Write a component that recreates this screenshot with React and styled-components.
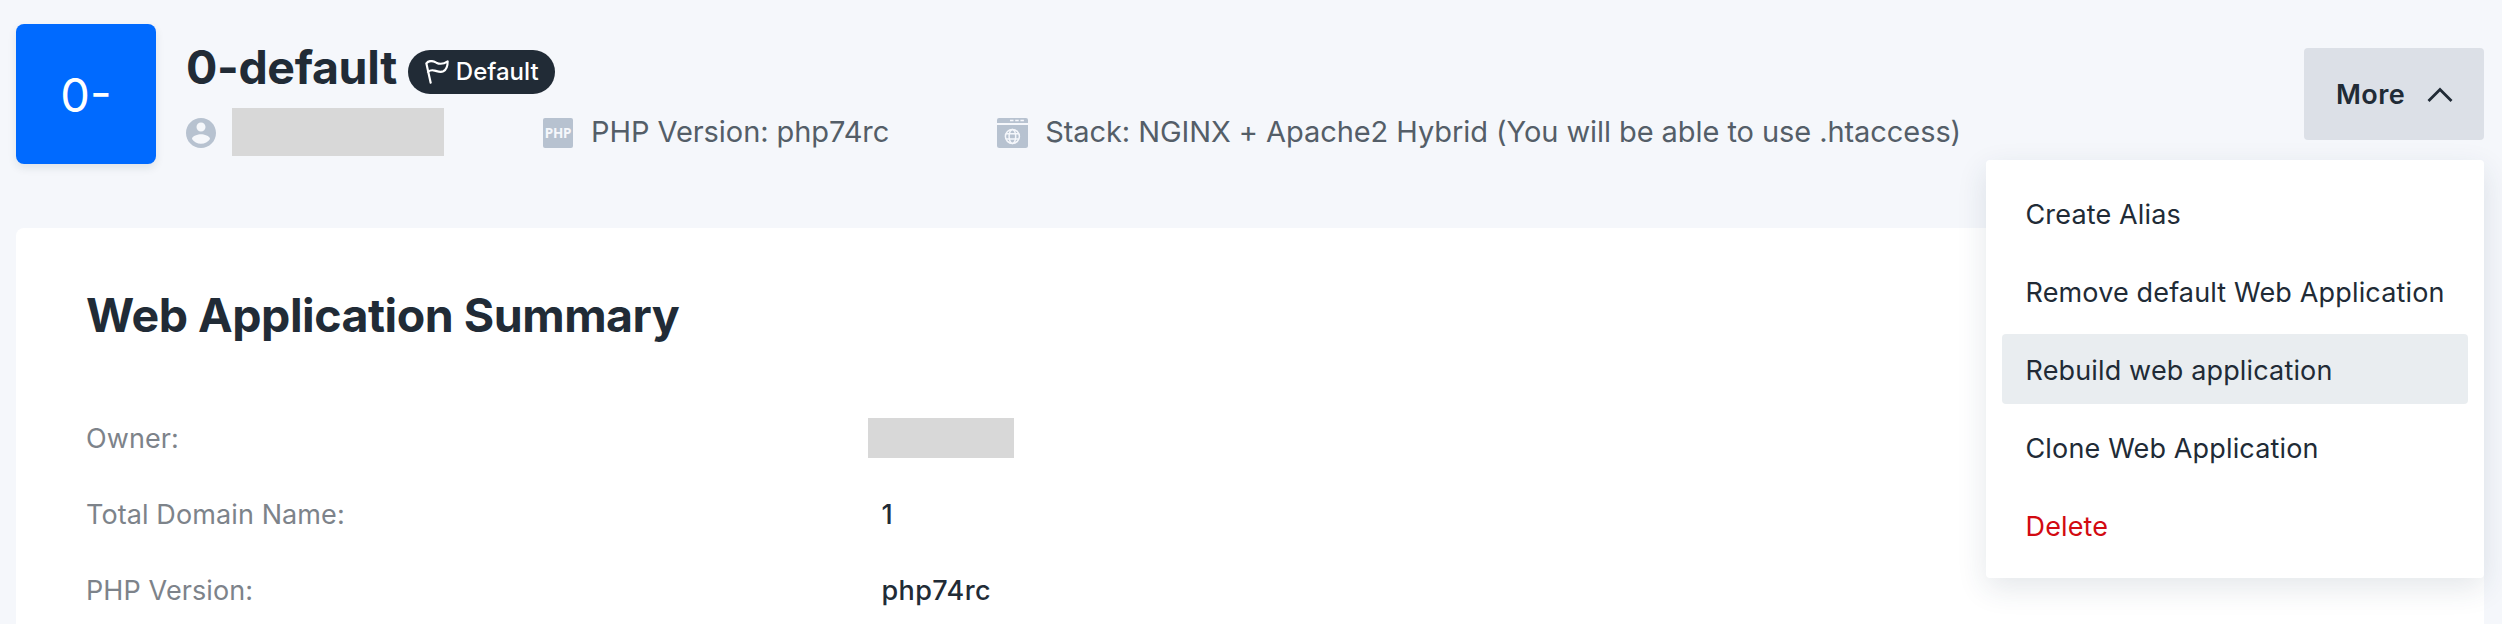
import React from 'react';
import styled, { createGlobalStyle } from 'styled-components';

const ink = '#212b36';
const iconTint = '#b7c2d0';

const GlobalStyle = createGlobalStyle`
  * { box-sizing: border-box; }
  body {
    margin: 0;
    background: #f5f7fb;
    color: ${ink};
    font-family: Inter, 'Liberation Sans', sans-serif;
    font-size: 27px;
    overflow: hidden;
  }
`;

const Page = styled.main`
  display: flex;
  flex-direction: column;
  height: 624px;
  padding: 24px 18px 0 16px;
  overflow: hidden;
`;

const Header = styled.header`
  display: flex;
  align-items: flex-start;
  height: 204px;
  flex: none;
`;

const Avatar = styled.div`
  display: flex;
  align-items: center;
  justify-content: center;
  width: 140px;
  height: 140px;
  margin-right: 30px;
  padding-top: 2px;
  border-radius: 8px;
  background: #006aff;
  box-shadow: 0 4px 8px rgba(33, 60, 70, 0.1);
  color: #fff;
  font-size: 47px;
  line-height: 60px;
`;

const Identity = styled.div`
  flex: 1;
  padding-top: 15px;
`;

const TitleRow = styled.div`
  display: flex;
  align-items: flex-start;
  gap: 11px;
  height: 69px;
`;

const Title = styled.h1`
  margin: 0;
  font-size: 46.5px;
  font-weight: 700;
  letter-spacing: -0.35px;
  line-height: 56px;
`;

const Badge = styled.span`
  display: flex;
  align-items: center;
  gap: 7px;
  height: 44px;
  margin-top: 11px;
  padding: 0 16px 0 17px;
  border-radius: 22px;
  background: ${ink};
  color: #fff;
  font-size: 24px;
  font-weight: 500;
  line-height: 30px;
`;

const MetaRow = styled.div`
  display: flex;
  align-items: center;
  height: 48px;
`;

const MetaItem = styled.div`
  display: flex;
  align-items: center;
  gap: ${(p) => p.$gap}px;
  margin-right: ${(p) => p.$after || 0}px;
  color: #545e68;
  font-size: 29px;
  letter-spacing: -0.07px;
  line-height: 48px;
  white-space: nowrap;

  > svg, > i { position: relative; top: 1px; flex: none; }
`;

const MetaText = styled.span`
  height: 48px;
`;

const Redacted = styled.div`
  width: ${(p) => p.$w}px;
  height: ${(p) => p.$h}px;
  background: #d8d8d8;
`;

const PhpIcon = styled.i`
  display: flex;
  align-items: center;
  justify-content: center;
  width: 30px;
  height: 30px;
  border-radius: 2px;
  background: ${iconTint};
  color: #f5f7fb;
  font: 700 13.5px/30px 'Noto Sans', sans-serif;
  letter-spacing: -0.2px;
`;

const Actions = styled.div`
  position: relative;
  padding-top: 24px;
`;

const MoreButton = styled.button`
  display: flex;
  align-items: center;
  justify-content: space-between;
  width: 180px;
  height: 92px;
  padding: 1px 31px 0 32px;
  border: 0;
  border-radius: 4px;
  background: #dce0e7;
  color: ${ink};
  font: 600 27px/35px Inter, sans-serif;
  letter-spacing: 0.4px;
`;

const Menu = styled.ul`
  position: absolute;
  top: 136px;
  right: 0;
  z-index: 1;
  display: flex;
  flex-direction: column;
  gap: 8px;
  width: 498px;
  height: 418px;
  margin: 0;
  padding: 18px 16px;
  border-radius: 4px;
  background: #fff;
  box-shadow: 0 10px 30px rgba(33, 60, 80, 0.12);
  list-style: none;
`;

const MenuItem = styled.li`
  height: 70px;
  padding: 2px 0 0 23.5px;
  border-radius: 4px;
  background: ${(p) => (p.$active ? '#e9edf0' : 'transparent')};
  color: ${(p) => (p.$danger ? '#d20a11' : ink)};
  line-height: 70px;
  letter-spacing: 0.15px;
  white-space: nowrap;
`;

const Card = styled.section`
  flex: 1;
  padding: 57px 70px 0;
  border-radius: 8px 8px 0 0;
  background: #fff;
`;

const CardTitle = styled.h2`
  margin: 0 0 55px;
  font-size: 46.5px;
  font-weight: 700;
  letter-spacing: -0.48px;
  line-height: 60px;
`;

const Summary = styled.dl`
  display: grid;
  grid-template-columns: 782px 1fr;
  grid-auto-rows: 76px;
  align-items: center;
  margin: 0;
  line-height: 74px;
`;

const Label = styled.dt`
  padding-top: 2px;
  color: #7d838a;
  letter-spacing: 0.1px;
`;

const Value = styled.dd`
  margin: 0;
  padding: ${(p) => (p.$text ? '2px 0 0 13.5px' : '0')};
  font-weight: 500;
  letter-spacing: 0.4px;
`;

const FlagIcon = () => (
  <svg width="24" height="24" viewBox="0 0 72 72" fill="none" stroke="#fff" strokeWidth="6.500" strokeLinecap="round" strokeLinejoin="round">
    <path d="M17 68 L4 10 C12 0 23 2 34 8 C46 14 56 12 68 4 C68 17 63 30 55 34 C44 39 35 32 25 31 C18 30 13 32 9 36" />
  </svg>
);

const UserIcon = () => (
  <svg width="30" height="30" viewBox="2 2 20 20" fill={iconTint}>
    <path d="M12 2C6.48 2 2 6.48 2 12s4.48 10 10 10 10-4.480 10-10S17.520 2 12 2zm0 3c1.660 0 3 1.340 3 3s-1.340 3-3 3-3-1.340-3-3 1.340-3 3-3zm0 14.200c-2.500 0-4.710-1.280-6-3.220.030-1.990 4-3.080 6-3.080 1.990 0 5.970 1.090 6 3.080-1.290 1.940-3.500 3.220-6 3.220z" />
  </svg>
);

const StackIcon = () => (
  <svg width="31" height="30" viewBox="0 0 31 30">
    <path fill={iconTint} d="M2 0H29Q31 0 31 2V5H0V2Q0 0 2 0ZM0 7H31V27.500Q31 30 28.500 30H2.500Q0 30 0 27.500Z" />
    <path stroke="#f5f7fb" strokeWidth="1.500" strokeDasharray="3.500 1.700" d="M13 2.600H27.500" />
    <g fill="none" stroke="#f5f7fb" strokeWidth="1.500">
      <circle cx="15.400" cy="18.400" r="7" />
      <ellipse cx="15.400" cy="18.400" rx="3.300" ry="7" />
      <path d="M9 15.800H21.800M9 21H21.800" />
    </g>
  </svg>
);

const ChevronUp = () => (
  <svg width="26" height="16" viewBox="0 0 26 16" fill="none" stroke={ink} strokeWidth="2.800">
    <path d="M1.500 14L13 2.500L24.500 14" />
  </svg>
);

const menuItems = [
  { text: 'Create Alias' },
  { text: 'Remove default Web Application' },
  { text: 'Rebuild web application', active: true },
  { text: 'Clone Web Application' },
  { text: 'Delete', danger: true },
];

export default function App() {
  return (
    <Page>
      <GlobalStyle />
      <Header>
        <Avatar>0-</Avatar>
        <Identity>
          <TitleRow>
            <Title>0-default</Title>
            <Badge><FlagIcon />Default</Badge>
          </TitleRow>
          <MetaRow>
            <MetaItem $gap={16} $after={99}><UserIcon /><Redacted $w={212} $h={48} /></MetaItem>
            <MetaItem $gap={18} $after={108}><PhpIcon>PHP</PhpIcon><MetaText>PHP Version: php74rc</MetaText></MetaItem>
            <MetaItem $gap={17}>
              <StackIcon />
              <MetaText>Stack: NGINX + Apache2 Hybrid (You will be able to use .htaccess)</MetaText>
            </MetaItem>
          </MetaRow>
        </Identity>
        <Actions>
          <MoreButton type="button">More<ChevronUp /></MoreButton>
          <Menu>
            {menuItems.map((item) => (
              <MenuItem key={item.text} $active={item.active} $danger={item.danger}>{item.text}</MenuItem>
            ))}
          </Menu>
        </Actions>
      </Header>
      <Card>
        <CardTitle>Web Application Summary</CardTitle>
        <Summary>
          <Label>Owner:</Label>
          <Value><Redacted $w={146} $h={40} /></Value>
          <Label>Total Domain Name:</Label>
          <Value $text>1</Value>
          <Label>PHP Version:</Label>
          <Value $text>php74rc</Value>
        </Summary>
      </Card>
    </Page>
  );
}
